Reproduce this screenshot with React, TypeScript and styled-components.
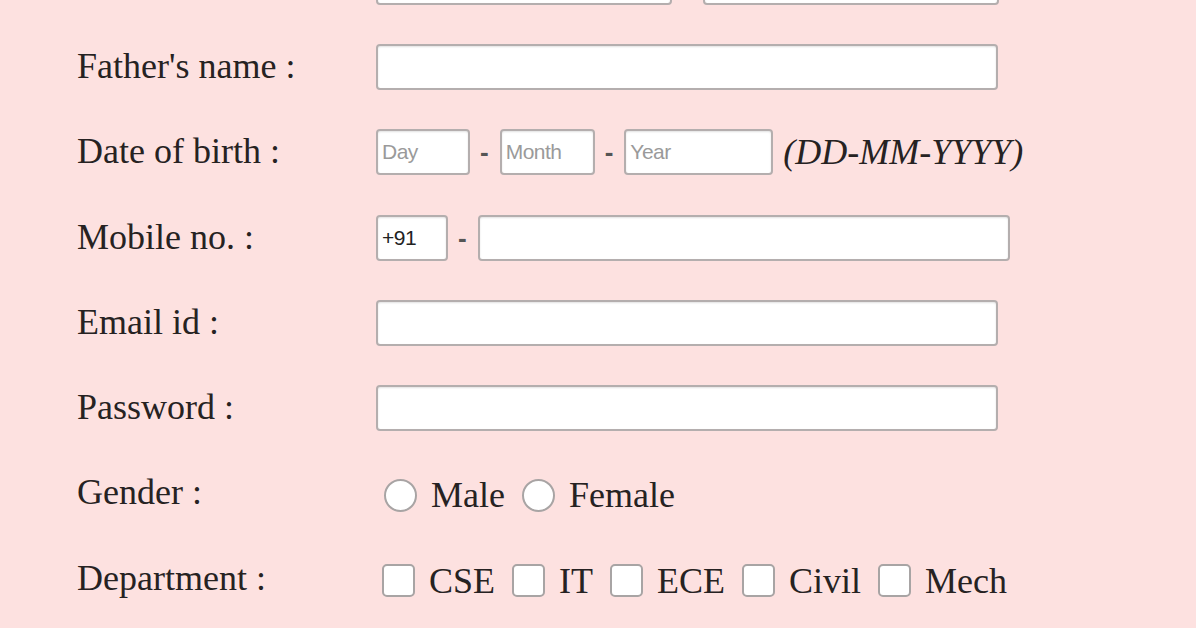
import React from "react";
import styled, { createGlobalStyle } from "styled-components";

const GlobalStyle = createGlobalStyle`
  html, body {
    margin: 0;
    padding: 0;
    background: #fde1e0;
    overflow: hidden;
  }
  body {
    font-family: "Liberation Serif", "Times New Roman", serif;
    color: #262222;
  }
`;

const Page = styled.div`
  width: 1196px;
  height: 628px;
  overflow: hidden;
  background: #fde1e0;
`;

const Form = styled.form`
  display: grid;
  grid-template-columns: 299px 1fr;
  grid-auto-rows: 85.3px;
  align-items: center;
  padding-left: 77px;
  margin-top: -61px;
`;

const Label = styled.label`
  font-size: 36px;
  line-height: 1;
  color: #262222;
  white-space: nowrap;
  margin-top: -2px;
`;

const Line = styled.div<{ $gap?: number }>`
  display: flex;
  align-items: center;
  gap: ${(p) => p.$gap ?? 0}px;
`;

const TextBox = styled.input<{ $w: number }>`
  box-sizing: border-box;
  width: ${(p) => p.$w}px;
  height: 46px;
  margin: 0;
  padding: 0 4px;
  border: 2px solid #b4aeae;
  border-radius: 4px;
  background: #fff;
  box-shadow: inset 0 1px 2px rgba(0, 0, 0, 0.12);
  font-family: "Liberation Sans", Arial, sans-serif;
  font-size: 21px;
  letter-spacing: -0.5px;
  color: #222;
  outline: none;
  &::placeholder {
    color: #9a9a9a;
  }
`;

const Dash = styled.span`
  font-family: "Liberation Sans", Arial, sans-serif;
  font-size: 26px;
  font-weight: bold;
  color: #555;
  padding: 0 11px 0 10px;
  line-height: 1;
`;

const Hint = styled.span`
  font-size: 36px;
  font-style: italic;
  margin-left: 10px;
  color: #262222;
`;

const Choice = styled.label`
  display: flex;
  align-items: center;
  gap: 14px;
  font-size: 36px;
  color: #262222;
  margin-right: 9px;
`;

const Radio = styled.input.attrs({ type: "radio" })`
  appearance: none;
  box-sizing: border-box;
  width: 33px;
  height: 33px;
  margin: 0 0 0 8px;
  border: 2px solid #a8a4a4;
  border-radius: 50%;
  background: #fff;
`;

const Check = styled.input.attrs({ type: "checkbox" })`
  appearance: none;
  box-sizing: border-box;
  width: 33px;
  height: 33px;
  margin: 0 0 0 6px;
  border: 2px solid #a8a4a4;
  border-radius: 5px;
  background: #fff;
`;

const ChoiceRow = styled.div`
  display: flex;
  align-items: center;
  padding-top: 4px;
`;

const CheckChoice = styled(Choice)`
  gap: 14px;
  margin-right: 11px;
`;

export default function App() {
  const departments = ["CSE", "IT", "ECE", "Civil", "Mech"];
  return (
    <Page>
      <GlobalStyle />
      <Form onSubmit={(e) => e.preventDefault()}>
        <Label>Student name :</Label>
        <Line $gap={31}>
          <TextBox $w={296} />
          <TextBox $w={296} />
        </Line>

        <Label>Father's name :</Label>
        <Line>
          <TextBox $w={622} />
        </Line>

        <Label>Date of birth :</Label>
        <Line>
          <TextBox $w={94} placeholder="Day" />
          <Dash>-</Dash>
          <TextBox $w={95} placeholder="Month" />
          <Dash>-</Dash>
          <TextBox $w={149} placeholder="Year" />
          <Hint>(DD-MM-YYYY)</Hint>
        </Line>

        <Label>Mobile no. :</Label>
        <Line>
          <TextBox $w={72} defaultValue="+91" />
          <Dash>-</Dash>
          <TextBox $w={532} />
        </Line>

        <Label>Email id :</Label>
        <Line>
          <TextBox $w={622} />
        </Line>

        <Label>Password :</Label>
        <Line>
          <TextBox $w={622} type="password" />
        </Line>

        <Label>Gender :</Label>
        <ChoiceRow>
          <Choice>
            <Radio name="gender" />
            Male
          </Choice>
          <Choice>
            <Radio name="gender" />
            Female
          </Choice>
        </ChoiceRow>

        <Label>Department :</Label>
        <ChoiceRow>
          {departments.map((d) => (
            <CheckChoice key={d}>
              <Check />
              {d}
            </CheckChoice>
          ))}
        </ChoiceRow>
      </Form>
    </Page>
  );
}
